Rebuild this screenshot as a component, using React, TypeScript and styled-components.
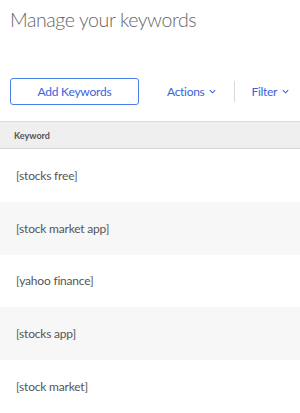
import React from "react";
import styled, { createGlobalStyle } from "styled-components";

const Global = createGlobalStyle`
  html, body { margin: 0; padding: 0; background: #fff; }
  body { font-family: Lato, "Open Sans", sans-serif; }
`;

const Page = styled.div`
  width: 300px;
  height: 413px;
  overflow: hidden;
  display: flex;
  flex-direction: column;
`;

const Title = styled.h1`
  margin: 0;
  padding: 9px 0 0 10px;
  height: 78px;
  flex: none;
  box-sizing: border-box;
  font-family: Lato, sans-serif;
  font-weight: 300;
  font-size: 19.5px;
  letter-spacing: -0.4px;
  line-height: 22px;
  color: #656565;
`;

const Toolbar = styled.div`
  display: flex;
  align-items: center;
  padding: 0 10px;
  height: 27px;
  flex: none;
  margin-bottom: 16px;
`;

const PrimaryButton = styled.button`
  width: 129px;
  height: 27px;
  box-sizing: border-box;
  border: 1px solid #4a7fe6;
  border-radius: 3px;
  background: #fff;
  color: #3a63dd;
  font-family: Lato, sans-serif;
  font-size: 12px;
  letter-spacing: -0.2px;
  padding: 0;
`;

const Menu = styled.button<{ $ml: number }>`
  display: flex;
  align-items: center;
  gap: 5px;
  border: 0;
  background: none;
  padding: 0;
  color: #3a63dd;
  font-family: Lato, sans-serif;
  font-size: 12px;
  letter-spacing: -0.3px;
  margin-left: ${(p) => p.$ml}px;
`;

const Divider = styled.div`
  width: 1px;
  height: 21px;
  background: #d8d8d8;
  margin-left: ${(p: { $ml: number }) => p.$ml}px;
`;

const HeaderRow = styled.div`
  height: 28px;
  flex: none;
  box-sizing: border-box;
  border-top: 1px solid #dcdcdc;
  border-bottom: 1px solid #d6d6d6;
  background: #efefef;
  display: flex;
  align-items: center;
  padding-left: 14px;
  font-family: Lato, sans-serif;
  font-weight: 700;
  font-size: 9px;
  color: #555;
`;

const Row = styled.div<{ $alt: boolean }>`
  height: 52.8px;
  flex: none;
  display: flex;
  align-items: center;
  padding-left: 16px;
  background: ${(p) => (p.$alt ? "#f7f7f7" : "#fff")};
  font-family: Lato, sans-serif;
  font-size: 12px;
  letter-spacing: -0.2px;
  color: #555;
`;

const Chevron = () => (
  <svg width="7" height="5" viewBox="0 0 7 5" fill="none">
    <path d="M0.8 1.2l2.7 2.6 2.7-2.6" stroke="#3a63dd" strokeWidth="1.1" />
  </svg>
);

const keywords = [
  "[stocks free]",
  "[stock market app]",
  "[yahoo finance]",
  "[stocks app]",
  "[stock market]",
];

export default function App() {
  return (
    <Page>
      <Global />
      <Title>Manage your keywords</Title>
      <Toolbar>
        <PrimaryButton>Add Keywords</PrimaryButton>
        <Menu $ml={28}>
          Actions <Chevron />
        </Menu>
        <Divider $ml={18} />
        <Menu $ml={16}>
          Filter <Chevron />
        </Menu>
      </Toolbar>
      <HeaderRow>Keyword</HeaderRow>
      {keywords.map((k, i) => (
        <Row key={k} $alt={i % 2 === 1}>
          {k}
        </Row>
      ))}
    </Page>
  );
}
